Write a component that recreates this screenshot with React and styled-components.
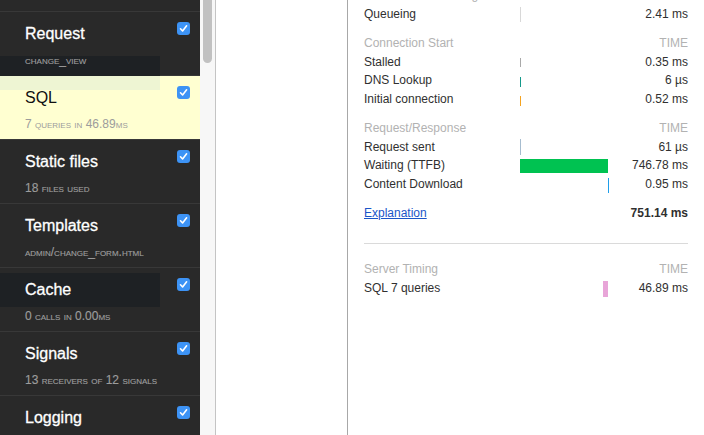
import styled, { createGlobalStyle } from "styled-components"

const GlobalStyle = createGlobalStyle`
  html, body {
    margin: 0;
    padding: 0;
    height: 100%;
    overflow: hidden;
    background: #fff;
  }
  body {
    font-family: "Liberation Sans", Arial, sans-serif;
  }
`

const Page = styled.div`
  display: flex;
  height: 435px;
  overflow: hidden;
`

const Sidebar = styled.div`
  position: relative;
  flex: none;
  width: 200px;
  box-sizing: border-box;
  padding-top: 11px;
  background: #292929;
  overflow: hidden;
`

const PanelList = styled.ul`
  list-style: none;
  margin: 0;
  padding: 0;
`

const Item = styled.li`
  display: flex;
  justify-content: space-between;
  align-items: flex-start;
  box-sizing: border-box;
  height: 64px;
  padding: 10px 10px 0 25px;
  border-top: 1px solid #383838;
  background: ${(p) => (p.$hover ? "#ffffd1" : "transparent")};
`

const ItemText = styled.div`
  position: relative;
  z-index: 1;
  display: flex;
  flex-direction: column;
  padding-top: 1px;
`

const ItemTitle = styled.span`
  font-size: 16px;
  line-height: 22px;
  color: ${(p) => (p.$hover ? "#111" : "#fff")};
  -webkit-text-stroke: ${(p) => (p.$hover ? "0" : "0.3px #fff")};
`

const ItemSub = styled.small`
  margin-top: 7px;
  font-size: 12px;
  line-height: 16px;
  font-variant: small-caps;
  color: #9c9c9c;
  white-space: nowrap;
  -webkit-text-stroke: ${(p) => (p.$hover ? "0" : "0.15px #9c9c9c")};
`

const Check = styled.span`
  position: relative;
  z-index: 1;
  display: flex;
  align-items: center;
  justify-content: center;
  width: 13px;
  height: 13px;
  border-radius: 3px;
  background: #3d93f5;
`

const Shade = styled.div`
  position: absolute;
  left: 0;
  width: 160px;
  top: ${(p) => p.$top}px;
  height: ${(p) => p.$height}px;
  background: ${(p) => p.$color};
`

const Scrollbar = styled.div`
  flex: none;
  width: 15px;
  background: #f7f7f7;
  border-right: 1px solid #c4c4c4;
`

const Thumb = styled.div`
  margin: 0 3px;
  height: 63px;
  border-radius: 0 0 5px 5px;
  background: #c1c1c1;
`

const Gutter = styled.div`
  flex: none;
  width: 131px;
  border-right: 1px solid #a8a8a8;
`

const Panel = styled.div`
  flex: 1;
  display: flex;
  flex-direction: column;
  margin-top: -14px;
  padding: 0 16px;
  font-size: 12px;
  color: #303030;
`

const Section = styled.div`
  display: flex;
  flex-direction: column;
  margin-top: ${(p) => p.$gap ?? 10.8}px;
`

const Row = styled.div`
  display: grid;
  grid-template-columns: 156px 88px 1fr;
  height: 18.6px;
  line-height: 18.6px;
  white-space: nowrap;
`

const HeadRow = styled(Row)`
  color: #b2b2b2;
`

const BarCell = styled.div`
  position: relative;
  height: 100%;
`

const Bar = styled.div`
  position: absolute;
  min-width: 1px;
  background: ${(p) => p.$color};
`

const Value = styled.span`
  text-align: right;
  font-weight: ${(p) => (p.$bold ? "bold" : "normal")};
`

const Link = styled.a`
  color: #1a55c8;
  text-decoration: underline;
`

const Divider = styled.div`
  margin-top: 20px;
  height: 1px;
  background: #dadada;
`

const TOTAL = 751.14
const BAR_W = 88

const items = [
  { title: "Request", sub: "change_view" },
  { title: "SQL", sub: "7 queries in 46.89ms", hover: true },
  { title: "Static files", sub: "18 files used" },
  { title: "Templates", sub: "admin/change_form.html" },
  { title: "Cache", sub: "0 calls in 0.00ms" },
  { title: "Signals", sub: "13 receivers of 12 signals" },
  { title: "Logging", sub: "0 messages" },
]

const sections = [
  {
    head: "Resource Scheduling",
    rows: [{ label: "Queueing", start: 0, dur: 2.41, value: "2.41 ms", color: "#d8d8d8", top: 2.5, h: 15 }],
  },
  {
    head: "Connection Start",
    rows: [
      { label: "Stalled", start: 0, dur: 0.35, value: "0.35 ms", color: "#a9a9a9", top: 5, h: 9 },
      { label: "DNS Lookup", start: 0, dur: 0.006, value: "6 µs", color: "#13998a", top: 5.5, h: 10 },
      { label: "Initial connection", start: 0, dur: 0.52, value: "0.52 ms", color: "#f5a31f", top: 6, h: 10 },
    ],
  },
  {
    head: "Request/Response",
    rows: [
      { label: "Request sent", start: 0, dur: 0.061, value: "61 µs", color: "#a6bccf", top: 1.5, h: 16 },
      { label: "Waiting (TTFB)", start: 3.4, dur: 746.78, value: "746.78 ms", color: "#00c251", top: 2.5, h: 14 },
      { label: "Content Download", start: 749.8, dur: 0.95, value: "0.95 ms", color: "#1f9eea", top: 3, h: 15 },
    ],
  },
]

const serverRows = [
  { label: "SQL 7 queries", start: TOTAL - 46.89, dur: 46.89, value: "46.89 ms", color: "#e8a5d8", top: 1.5, h: 16 },
]

function CheckBox() {
  return (
    <Check>
      <svg width="9" height="9" viewBox="0 0 9 9">
        <polyline points="1.5,4.8 3.6,7 7.6,1.8" fill="none" stroke="#fff" strokeWidth="1.6" strokeLinecap="round" strokeLinejoin="round" />
      </svg>
    </Check>
  )
}

function TimingRow({ row }) {
  const left = (row.start / TOTAL) * BAR_W
  const width = (row.dur / TOTAL) * BAR_W
  return (
    <Row>
      <span>{row.label}</span>
      <BarCell>
        <Bar $color={row.color} style={{ left, width, top: row.top, height: row.h }} />
      </BarCell>
      <Value>{row.value}</Value>
    </Row>
  )
}

function Head({ label }) {
  return (
    <HeadRow>
      <span>{label}</span>
      <span />
      <Value>TIME</Value>
    </HeadRow>
  )
}

export default function App() {
  return (
    <>
      <GlobalStyle />
      <Page>
        <Sidebar>
          <Shade $top={56} $height={20} $color="#1e2124" />
          <Shade $top={76} $height={14} $color="#eef5d3" />
          <Shade $top={273} $height={34} $color="#1e2124" />
          <PanelList>
            {items.map((it) => (
              <Item key={it.title} $hover={it.hover}>
                <ItemText>
                  <ItemTitle $hover={it.hover}>{it.title}</ItemTitle>
                  <ItemSub $hover={it.hover}>{it.sub}</ItemSub>
                </ItemText>
                <CheckBox />
              </Item>
            ))}
          </PanelList>
        </Sidebar>
        <Scrollbar>
          <Thumb />
        </Scrollbar>
        <Gutter />
        <Panel>
          {sections.map((s, i) => (
            <Section key={s.head} $gap={i === 0 ? 0 : undefined}>
              <Head label={s.head} />
              {s.rows.map((r) => (
                <TimingRow key={r.label} row={r} />
              ))}
            </Section>
          ))}
          <Section>
            <Row>
              <span>
                <Link href="#">Explanation</Link>
              </span>
              <span />
              <Value $bold>751.14 ms</Value>
            </Row>
          </Section>
          <Divider />
          <Section $gap={16.5}>
            <Head label="Server Timing" />
            {serverRows.map((r) => (
              <TimingRow key={r.label} row={r} />
            ))}
          </Section>
        </Panel>
      </Page>
    </>
  )
}
